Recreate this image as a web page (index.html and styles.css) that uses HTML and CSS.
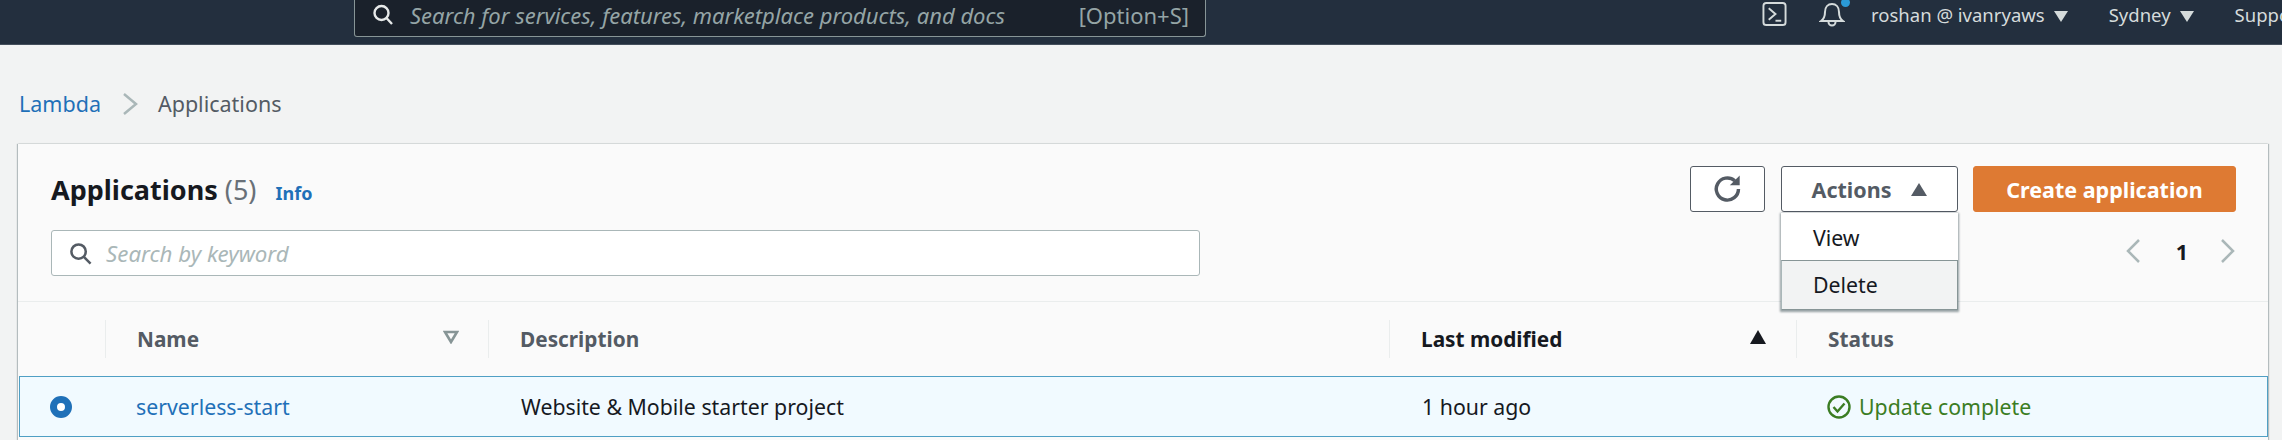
FILE: index.html
```html
<!DOCTYPE html>
<html lang="en">
<head>
<meta charset="utf-8">
<title>Lambda Applications</title>
<link rel="stylesheet" href="styles.css">
</head>
<body>
<header class="nav">
  <div class="nav-search">
    <svg class="nav-search-icon" viewBox="0 0 22 22"><circle cx="9.5" cy="9.5" r="7" fill="none" stroke="currentColor" stroke-width="2.4"/><path d="M14.5 14.5l5.5 6" stroke="currentColor" stroke-width="2.4" fill="none"/></svg>
    <span class="nav-search-text">Search for services, features, marketplace products, and docs</span>
    <span class="nav-search-key">[Option+S]</span>
  </div>
  <svg class="nav-console" viewBox="0 0 26 26"><rect x="1.5" y="1.5" width="23" height="23" rx="3" fill="none" stroke="currentColor" stroke-width="2"/><path d="M7 7l7 6-7 6" fill="none" stroke="currentColor" stroke-width="2"/><path d="M14 20h6" stroke="currentColor" stroke-width="2"/></svg>
  <span class="nav-bell">
    <svg viewBox="0 0 26 26"><path d="M2 20c3-2 4-5 4-9 0-5 3-8 7-8s7 3 7 8c0 4 1 7 4 9z" fill="none" stroke="currentColor" stroke-width="2"/><path d="M9.500 21a3.500 3.500 0 0 0 7 0" fill="none" stroke="currentColor" stroke-width="2"/></svg>
    <i class="nav-dot"></i>
  </span>
  <span class="nav-item nav-user">roshan @ ivanryaws</span><i class="nav-caret"></i>
  <span class="nav-item nav-region">Sydney</span><i class="nav-caret"></i>
  <span class="nav-item nav-support">Support</span>
</header>

<nav class="crumbs">
  <a class="link">Lambda</a>
  <svg class="crumb-sep" viewBox="0 0 16 24"><path d="M2 2l12 10L2 22" fill="none" stroke="#aab7b8" stroke-width="2.500"/></svg>
  <span class="crumb-current">Applications</span>
</nav>

<main class="panel">
  <section class="panel-head">
    <div class="head-left">
      <div class="title-line">
        <h1 class="title">Applications <span class="count">(5)</span></h1>
        <a class="info">Info</a>
      </div>
      <div class="filter">
        <svg class="filter-icon" viewBox="0 0 24 24"><circle cx="10" cy="10" r="7.500" fill="none" stroke="#545b64" stroke-width="2.600"/><path d="M15.500 15.500l7 7" stroke="#545b64" stroke-width="2.600"/></svg>
        <span class="filter-text">Search by keyword</span>
      </div>
    </div>
    <div class="head-right">
      <div class="actions">
        <button class="btn btn-refresh"><svg viewBox="0 0 26 26"><path d="M21.500 13a9 9 0 1 1-3-6.700" fill="none" stroke="#545b64" stroke-width="2.800"/><path d="M22.500 2v8h-8z" fill="#545b64"/></svg></button>
        <div class="menu-wrap">
          <button class="btn btn-actions">Actions<i class="caret-up"></i></button>
          <ul class="menu">
            <li class="menu-item">View</li>
            <li class="menu-item menu-item-active">Delete</li>
          </ul>
        </div>
        <button class="btn btn-primary">Create application</button>
      </div>
      <div class="pager">
        <svg class="pager-arrow" viewBox="0 0 16 26"><path d="M14 2L3 13l11 11" fill="none" stroke="#aab7b8" stroke-width="2.500"/></svg>
        <span class="pager-num">1</span>
        <svg class="pager-arrow" viewBox="0 0 16 26"><path d="M2 2l11 11L2 24" fill="none" stroke="#aab7b8" stroke-width="2.500"/></svg>
      </div>
    </div>
  </section>

  <div class="grid grid-head">
    <div class="th th-select"></div>
    <div class="th">Name<svg class="sort sort-name" viewBox="0 0 16 14"><path d="M2 2h12L8 12z" fill="none" stroke="#879596" stroke-width="2.600"/></svg></div>
    <div class="th">Description</div>
    <div class="th th-active">Last modified<svg class="sort sort-date" viewBox="0 0 16 14"><path d="M8 0l8 14H0z" fill="#16191f"/></svg></div>
    <div class="th">Status</div>
  </div>

  <div class="grid grid-row">
    <div class="td td-select"><i class="radio"></i></div>
    <div class="td td-name"><a class="link">serverless-start</a></div>
    <div class="td">Website &amp; Mobile starter project</div>
    <div class="td">1 hour ago</div>
    <div class="td td-status">
      <svg class="status-icon" viewBox="0 0 24 24"><circle cx="12" cy="12" r="10.500" fill="none" stroke="#3b7d23" stroke-width="2.400"/><path d="M6.500 12l4 4.500 7-8" fill="none" stroke="#3b7d23" stroke-width="2.400"/></svg>
      Update complete
    </div>
  </div>
</main>
</body>
</html>
```

FILE: styles.css
```css
* { box-sizing: border-box; }
html, body { margin: 0; height: 440px; overflow: hidden; }
body { background: #f2f3f3; font-family: "Noto Sans", "Open Sans", sans-serif; color: #16191f; font-size: 21.3px; }
a { cursor: pointer; }
ul { list-style: none; margin: 0; padding: 0; }
h1 { margin: 0; }

.nav { display: flex; align-items: flex-start; height: 45px; background: #232f3e; border-bottom: 1px solid #444f5c; padding-left: 354px; color: #d5dbdb; white-space: nowrap; overflow: hidden; }
.nav-search { display: flex; align-items: center; width: 852px; height: 37px; flex: none; background: #1a212b; border: 1px solid #879596; border-top: 0; border-radius: 0 0 3px 3px; padding: 0 16px 7px 17px; color: #95a5a6; }
.nav-search-icon { width: 22px; height: 25px; color: #e6e9e9; flex: none; }
.nav-search-text { margin-left: 16px; font-style: italic; font-size: 22px; }
.nav-search-key { margin-left: auto; font-size: 22px; }
.nav-console { width: 25px; height: 26px; margin: 1px 0 0 556px; flex: none; }
.nav-bell { position: relative; width: 26px; height: 26px; margin: 1px 0 0 32px; flex: none; }
.nav-bell svg { width: 26px; height: 26px; display: block; }
.nav-dot { position: absolute; top: -3px; right: -5px; width: 9px; height: 9px; border-radius: 50%; background: #2b9ad6; }
.nav-item { font-size: 18.5px; line-height: 30px; }
.nav-user { margin-left: 26px; }
.nav-region { margin-left: 41px; }
.nav-support { margin-left: 41px; }
.nav-caret { width: 0; height: 0; margin: 11px 0 0 9px; border-left: 7px solid transparent; border-right: 7px solid transparent; border-top: 11px solid #d5dbdb; flex: none; }

.crumbs { display: flex; align-items: center; height: 99px; padding: 18px 0 0 19px; font-size: 21.5px; }
.link { color: #1f70b8; }
.crumb-sep { width: 16px; height: 24px; margin: 0 20px 0 21px; }
.crumb-current { color: #545b64; }

.panel { margin: 0 14px 0 18px; background: #fafafa; box-shadow: -1px 0 1px rgba(0,28,36,.25), 1px 0 1px rgba(0,28,36,.25), 0 -1px 1px rgba(0,28,36,.03); height: 296px; }
.panel-head { display: flex; justify-content: space-between; height: 158px; border-bottom: 1px solid #eaeded; padding: 22px 32px 0 33px; }
.head-left { width: 1149px; }
.title-line { display: flex; align-items: baseline; height: 64px; padding-top: 5px; }
.title { font-size: 27px; font-weight: 700; }
.count { font-weight: 400; color: #687078; }
.info { margin-left: 19px; font-size: 18px; font-weight: 700; color: #1f70b8; }
.filter { display: flex; align-items: center; height: 46px; background: #fff; border: 1px solid #aab7b8; border-radius: 3px; padding-left: 17px; }
.filter-icon { width: 23px; height: 23px; }
.filter-text { margin-left: 14px; font-style: italic; font-size: 22.3px; color: #aab7b8; }

.head-right { display: flex; flex-direction: column; align-items: flex-end; }
.actions { display: flex; gap: 16px; }
.btn { display: flex; align-items: center; justify-content: center; height: 46px; border: 1px solid #545b64; border-radius: 3px; background: #fff; color: #545b64; font: 700 21.5px "Noto Sans", sans-serif; padding: 0; }
.btn-refresh { width: 75px; }
.btn-refresh svg { width: 32px; height: 32px; }
.menu-wrap { position: relative; margin-right: -1px; }
.btn-actions { width: 177px; }
.caret-up { width: 0; height: 0; margin-left: 20px; border-left: 8px solid transparent; border-right: 8px solid transparent; border-bottom: 13px solid #545b64; }
.btn-primary { width: 263px; background: #de7a33; border-color: #de7a33; color: #fff; }
.menu { position: absolute; left: 0; right: 0; top: 47px; background: #fff; box-shadow: 0 1px 2px 1px rgba(0,28,36,.4); }
.menu-item { height: 47px; line-height: 49px; padding-left: 32px; }
.menu-item-active { height: 50px; line-height: 48px; background: #f2f3f3; border: 1px solid #879596; border-left: 1px solid #aab7b8; padding-left: 31px; }

.pager { display: flex; align-items: center; margin-top: 16px; height: 46px; }
.pager-arrow { width: 16px; height: 26px; }
.pager-num { margin: 0 32px 0 35px; font-size: 21.5px; font-weight: 700; }

.grid { display: grid; grid-template-columns: 87px 383px 901px 407px 1fr; }
.grid-head { height: 74px; align-items: center; font-size: 20.8px; }
.th { position: relative; display: flex; align-items: center; height: 38px; padding-left: 31px; font-weight: 700; color: #545b64; border-left: 1px solid #eaeded; }
.th-select { border-left: 0; }
.th-active { color: #16191f; }
.sort { position: absolute; top: 10px; width: 16px; height: 14px; }
.sort-name { right: 29px; }
.sort-date { right: 30px; }

.grid-row { height: 61px; align-items: center; background: #f1faff; border: 1px solid #4f9fc4; margin-left: 1px; }
.td { padding-left: 31px; }
.td-select { padding-left: 30px; display: flex; }
.td-name { padding-left: 29px; }
.radio { width: 22px; height: 22px; border-radius: 50%; border: 7px solid #1f70b8; background: #fff; }
.td-status { display: flex; align-items: center; gap: 8px; color: #3b7d23; padding-left: 29px; }
.status-icon { width: 24px; height: 24px; }
```
